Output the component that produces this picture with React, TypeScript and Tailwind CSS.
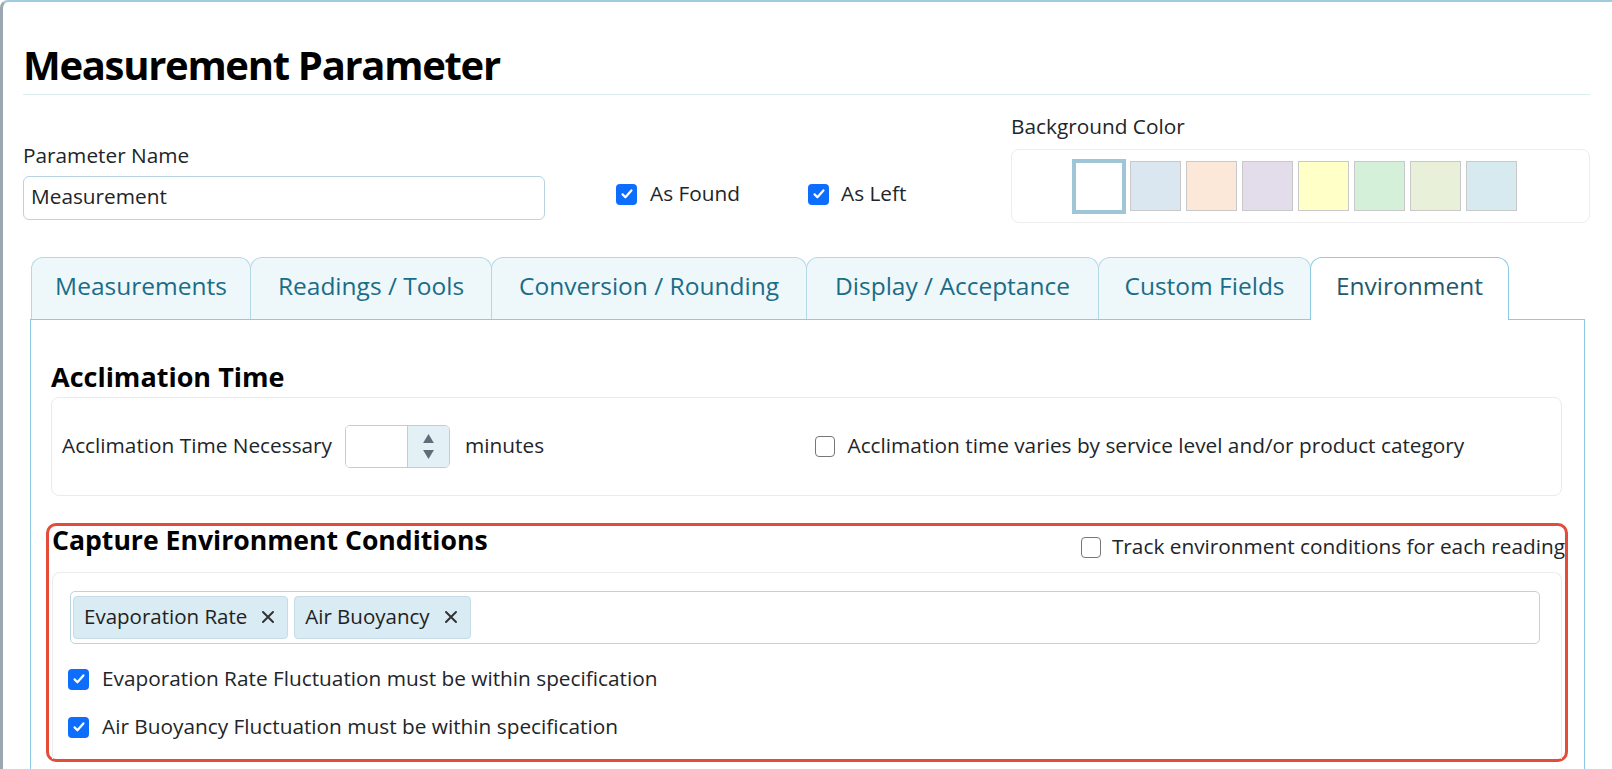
import React from "react";

const swatches = [
  "#dae6f0",
  "#fce8d9",
  "#e3dcea",
  "#ffffc8",
  "#d4f0d8",
  "#e9f0da",
  "#d6eaf0",
];

const tabs = [
  { label: "Measurements", w: "w-[220px]" },
  { label: "Readings / Tools", w: "w-[242px]" },
  { label: "Conversion / Rounding", w: "w-[316px]" },
  { label: "Display / Acceptance", w: "w-[293px]" },
  { label: "Custom Fields", w: "w-[213px]" },
  { label: "Environment", w: "w-[199px]", active: true },
];

function Check({ checked }: { checked: boolean }) {
  if (!checked) {
    return (
      <span className="h-[21px] w-[20px] shrink-0 rounded-[4px] border-[1.5px] border-[#777] bg-white" />
    );
  }
  return (
    <span className="flex h-[21px] w-[21px] shrink-0 items-center justify-center rounded-[4px] bg-[#0d6efd]">
      <svg viewBox="0 0 20 20" className="h-[16px] w-[16px]">
        <path
          d="M4.5 10.5l3.5 3.5 7.5-8.5"
          fill="none"
          stroke="#fff"
          strokeWidth="2.8"
          strokeLinecap="round"
          strokeLinejoin="round"
        />
      </svg>
    </span>
  );
}

function Tag({ label }: { label: string }) {
  return (
    <span className="flex h-[43px] items-center gap-[14px] rounded-[4px] border border-[#c6dce6] bg-[#d9ebf3] pb-[2px] pl-[10px] pr-[12px] text-[20.5px] text-[#222]">
      {label}
      <svg viewBox="0 0 14 14" className="h-[14px] w-[14px]">
        <path d="M2 2l10 10M12 2L2 12" stroke="#333" strokeWidth="2" strokeLinecap="round" />
      </svg>
    </span>
  );
}

export default function App() {
  return (
    <div className="h-[769px] w-[1612px] overflow-hidden bg-white font-['Open_Sans',sans-serif] text-[20.8px] text-[#212529]">
      <div className="h-full rounded-tl-[8px] border-l-[3px] border-t-[2px] border-l-[#9aa7b0] border-t-[#9fcbdc] pl-[20px] pr-[22px]">
        <h1 className="pt-[37px] text-[40px] font-bold leading-[52px] tracking-[-1.3px] text-black">
          Measurement Parameter
        </h1>
        <div className="mt-[3px] h-px bg-[#dcedf2]" />

        {/* top form row */}
        <div className="flex items-start">
          <div className="mt-[48px] w-[522px]">
            <div className="leading-[24px]">Parameter Name</div>
            <div className="mt-[9px] flex h-[44px] items-center rounded-[6px] border border-[#b9d3df] pb-[2px] pl-[7px]">
              Measurement
            </div>
          </div>

          <div className="ml-[71px] mt-[87px] flex h-[24px] items-center leading-[24px]">
            <label className="flex h-[24px] w-[192px] items-center gap-[13px]">
              <Check checked />
              <span className="-mt-[2px]">As Found</span>
            </label>
            <label className="flex h-[24px] items-center gap-[12px]">
              <Check checked />
              <span className="-mt-[2px]">As Left</span>
            </label>
          </div>

          <div className="ml-auto mt-[19px] w-[579px]">
            <div className="leading-[24px]">Background Color</div>
            <div className="mt-[11px] flex h-[74px] items-center rounded-[8px] border border-[#ededed] pl-[60px]">
              <span className="h-[55px] w-[54px] border-[4px] border-[#9ec6d7] bg-white" />
              <div className="ml-[4px] flex gap-[5px]">
                {swatches.map((c) => (
                  <span
                    key={c}
                    className="h-[50px] w-[51px] border border-[#c9c9c9]"
                    style={{ backgroundColor: c }}
                  />
                ))}
              </div>
            </div>
          </div>
        </div>

        {/* tabs */}
        <div className="ml-[8px] mt-[34px] flex h-[62px] items-start">
          {tabs.map((t, i) => (
            <div
              key={t.label}
              className={[
                "flex items-center justify-center rounded-t-[12px] border border-b-0 pb-[5px] text-[24.5px]",
                t.w,
                i > 0 ? "-ml-px" : "",
                t.active
                  ? "relative z-10 h-[63px] border-[#8ccbe2] bg-white text-[#24596b]"
                  : "h-[62px] border-[#b3d9e7] bg-[#eef8fb] text-[#1b6c87]",
              ].join(" ")}
            >
              {t.label}
            </div>
          ))}
        </div>

        {/* panel */}
        <div className="ml-[7px] mr-[5px] h-[500px] border border-b-0 border-[#8ccbe2] pl-[20px] pr-[22px] pt-[41px]">
          <h2 className="text-[27px] font-bold leading-[32px] text-black">Acclimation Time</h2>
          <div className="mt-[4px] grid h-[99px] grid-cols-2 items-center rounded-[8px] border border-[#ebebeb]">
            <div className="flex items-center pl-[10px]">
              <span className="-mt-[2px]">Acclimation Time Necessary</span>
              <div className="ml-[13px] flex h-[43px] w-[105px] overflow-hidden rounded-[5px] border border-[#b6d1dd]">
                <div className="flex-1 bg-white" />
                <div className="flex w-[42px] flex-col items-center justify-center gap-[7px] border-l border-[#b6d1dd] bg-[#e3f0f6]">
                  <svg viewBox="0 0 12 10" className="h-[9px] w-[11px]">
                    <path d="M6 0L12 10H0z" fill="#5f6d78" />
                  </svg>
                  <svg viewBox="0 0 12 10" className="h-[9px] w-[11px]">
                    <path d="M0 0H12L6 10z" fill="#5f6d78" />
                  </svg>
                </div>
              </div>
              <span className="-mt-[2px] ml-[15px]">minutes</span>
            </div>
            <label className="flex h-[24px] items-center gap-[13px] pl-[8px]">
              <Check checked={false} />
              <span className="-mt-[2px]">
                Acclimation time varies by service level and/or product category
              </span>
            </label>
          </div>

          {/* highlighted section */}
          <div className="-ml-[5px] -mr-[6px] mt-[27px] rounded-[10px] border-[3px] border-[#e34b3a] px-[3px]">
            <div className="flex h-[33px] items-start justify-between">
              <h2 className="text-[26.6px] font-bold leading-[28px] text-black">
                Capture Environment Conditions
              </h2>
              <label className="-mr-[3px] mt-[9px] flex h-[24px] items-center gap-[11px] whitespace-nowrap leading-[24px]">
                <Check checked={false} />
                <span className="-mt-[2px]">Track environment conditions for each reading</span>
              </label>
            </div>
            <div className="mt-[13px] rounded-t-[8px] border border-b-0 border-[#ececec] pb-[20px] pl-[17px] pr-[21px] pt-[18px]">
              <div className="flex h-[53px] items-center gap-[6px] rounded-[5px] border border-[#b9d5e1] pl-[2px]">
                <Tag label="Evaporation Rate" />
                <Tag label="Air Buoyancy" />
              </div>
              <label className="-ml-[2px] mt-[23px] flex h-[24px] items-center gap-[13px] leading-[24px]">
                <Check checked />
                <span className="-mt-[2px]">
                  Evaporation Rate Fluctuation must be within specification
                </span>
              </label>
              <label className="-ml-[2px] mt-[24px] flex h-[24px] items-center gap-[13px] leading-[24px]">
                <Check checked />
                <span className="-mt-[2px]">Air Buoyancy Fluctuation must be within specification</span>
              </label>
            </div>
          </div>
        </div>
      </div>
    </div>
  );
}
